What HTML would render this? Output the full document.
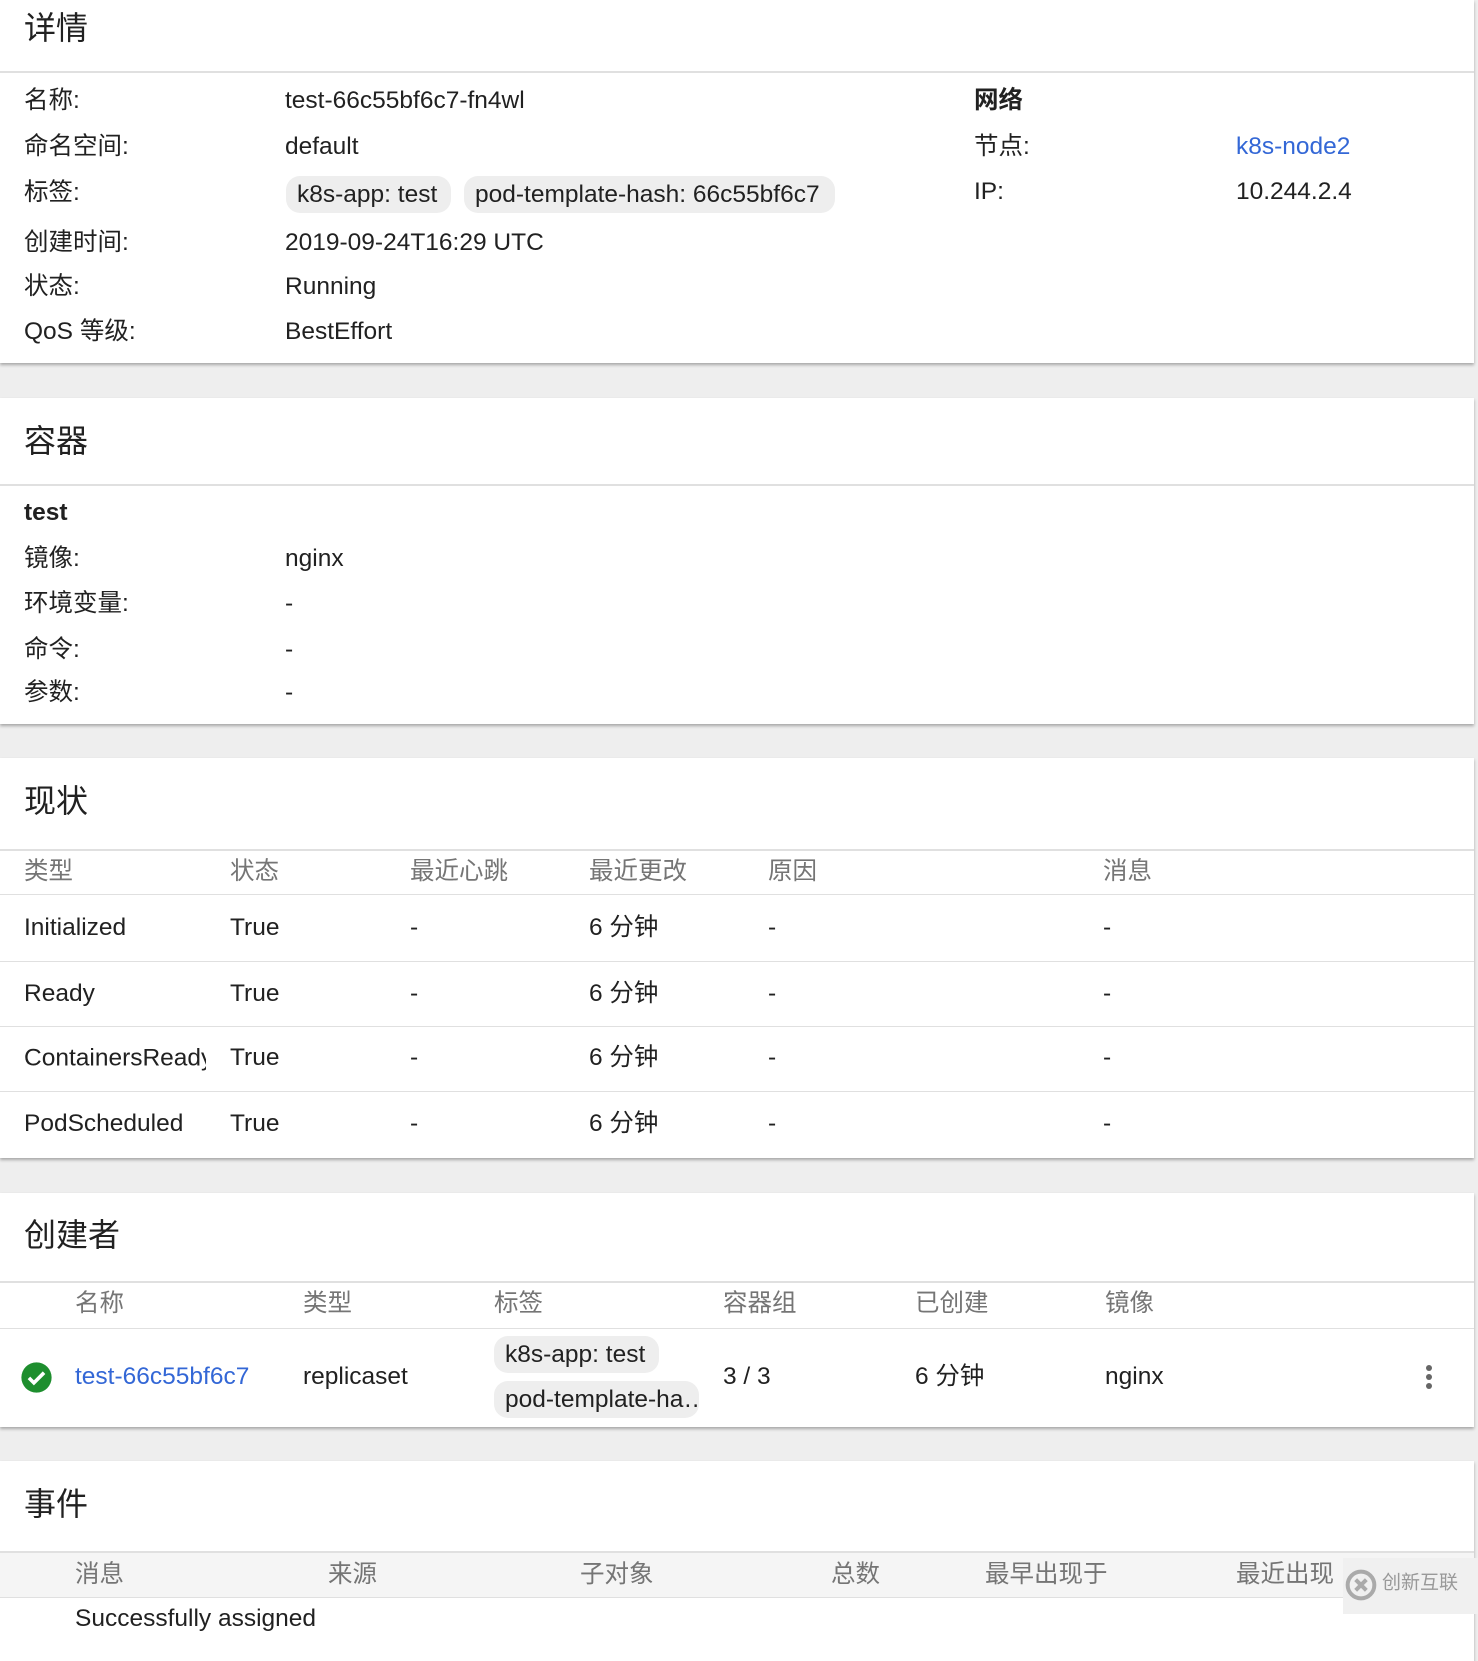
<!DOCTYPE html>
<html><head><meta charset="utf-8"><style>
*{margin:0;padding:0;box-sizing:border-box}
body{width:1478px;height:1614px;background:#eeeeee;font-family:"Liberation Sans","Noto Sans CJK SC",sans-serif;color:#212121;position:relative;overflow:hidden;font-size:24.5px}
.card{position:absolute;left:0;width:1474px;background:#fff;box-shadow:0 2px 3px rgba(0,0,0,.3)}
.t{position:absolute;white-space:nowrap;line-height:1;transform:translateY(-50%)}
.h{font-size:32px;color:#212121}
.hr{position:absolute;left:0;right:0;height:2px;background:#e0e0e0}
.g{color:#757575}
.b{font-weight:bold}
.chip{position:absolute;background:#eeeeee;border-radius:14px;height:37px;line-height:37px;padding:0 11px;white-space:nowrap}
a{color:#3367d6;text-decoration:none}
</style></head><body>

<div class="card" style="top:0;height:363px">
<div class="t h" style="left:24px;top:28px">详情</div>
<div class="hr" style="top:71px"></div>
<div class="t" style="left:24px;top:101px">名称:</div><div class="t" style="left:285px;top:101px">test-66c55bf6c7-fn4wl</div>
<div class="t" style="left:24px;top:147px">命名空间:</div><div class="t" style="left:285px;top:147px">default</div>
<div class="t" style="left:24px;top:193px">标签:</div>
<div class="chip" style="left:286px;top:176px;width:165px">k8s-app: test</div>
<div class="chip" style="left:464px;top:176px;width:371px">pod-template-hash: 66c55bf6c7</div>
<div class="t" style="left:24px;top:243px">创建时间:</div><div class="t" style="left:285px;top:243px">2019-09-24T16:29 UTC</div>
<div class="t" style="left:24px;top:287px">状态:</div><div class="t" style="left:285px;top:287px">Running</div>
<div class="t" style="left:24px;top:332px">QoS 等级:</div><div class="t" style="left:285px;top:332px">BestEffort</div>
<div class="t b" style="left:974px;top:101px">网络</div>
<div class="t" style="left:974px;top:147px">节点:</div><div class="t" style="left:1236px;top:147px"><a>k8s-node2</a></div>
<div class="t" style="left:974px;top:192px">IP:</div><div class="t" style="left:1236px;top:192px">10.244.2.4</div>
</div>

<div class="card" style="top:398px;height:326px">
<div class="t h" style="left:24px;top:43px">容器</div>
<div class="hr" style="top:86px"></div>
<div class="t b" style="left:24px;top:115px">test</div>
<div class="t" style="left:24px;top:161px">镜像:</div><div class="t" style="left:285px;top:161px">nginx</div>
<div class="t" style="left:24px;top:206px">环境变量:</div><div class="t" style="left:285px;top:206px">-</div>
<div class="t" style="left:24px;top:252px">命令:</div><div class="t" style="left:285px;top:252px">-</div>
<div class="t" style="left:24px;top:295px">参数:</div><div class="t" style="left:285px;top:295px">-</div>
</div>

<div class="card" style="top:758px;height:400px">
<div class="t h" style="left:24px;top:43px">现状</div>
<div class="hr" style="top:91px"></div>
<div class="t g" style="left:24px;top:114px">类型</div><div class="t g" style="left:230px;top:114px">状态</div><div class="t g" style="left:410px;top:114px">最近心跳</div><div class="t g" style="left:589px;top:114px">最近更改</div><div class="t g" style="left:768px;top:114px">原因</div><div class="t g" style="left:1103px;top:114px">消息</div>
<div class="hr" style="top:136px;height:1px"></div>
<div class="t" style="left:24px;top:170px">Initialized</div><div class="t" style="left:230px;top:170px">True</div><div class="t" style="left:410px;top:170px">-</div><div class="t" style="left:589px;top:170px">6 分钟</div><div class="t" style="left:768px;top:170px">-</div><div class="t" style="left:1103px;top:170px">-</div>
<div class="hr" style="top:203px;height:1px"></div>
<div class="t" style="left:24px;top:236px">Ready</div><div class="t" style="left:230px;top:236px">True</div><div class="t" style="left:410px;top:236px">-</div><div class="t" style="left:589px;top:236px">6 分钟</div><div class="t" style="left:768px;top:236px">-</div><div class="t" style="left:1103px;top:236px">-</div>
<div class="hr" style="top:268px;height:1px"></div>
<div class="t" style="left:24px;top:300px;width:182px;overflow:hidden;line-height:1.2">ContainersReady</div><div class="t" style="left:230px;top:300px">True</div><div class="t" style="left:410px;top:300px">-</div><div class="t" style="left:589px;top:300px">6 分钟</div><div class="t" style="left:768px;top:300px">-</div><div class="t" style="left:1103px;top:300px">-</div>
<div class="hr" style="top:333px;height:1px"></div>
<div class="t" style="left:24px;top:366px">PodScheduled</div><div class="t" style="left:230px;top:366px">True</div><div class="t" style="left:410px;top:366px">-</div><div class="t" style="left:589px;top:366px">6 分钟</div><div class="t" style="left:768px;top:366px">-</div><div class="t" style="left:1103px;top:366px">-</div>
</div>

<div class="card" style="top:1193px;height:234px">
<div class="t h" style="left:24px;top:42px">创建者</div>
<div class="hr" style="top:88px"></div>
<div class="t g" style="left:75px;top:111px">名称</div><div class="t g" style="left:303px;top:111px">类型</div><div class="t g" style="left:494px;top:111px">标签</div><div class="t g" style="left:723px;top:111px">容器组</div><div class="t g" style="left:915px;top:111px">已创建</div><div class="t g" style="left:1105px;top:111px">镜像</div>
<div class="hr" style="top:135px;height:1px"></div>
<svg style="position:absolute;left:20px;top:168px" width="33" height="33" viewBox="0 0 24 24"><circle cx="12" cy="12" r="11" fill="#1e8e2e"/><path d="M6.5 12.3l3.6 3.6 7.4-7.4" stroke="#fff" stroke-width="2.6" fill="none"/></svg>
<div class="t" style="left:75px;top:184px"><a>test-66c55bf6c7</a></div>
<div class="t" style="left:303px;top:184px">replicaset</div>
<div class="chip" style="left:494px;top:143px;width:165px">k8s-app: test</div>
<div class="chip" style="left:494px;top:188px;width:205px;overflow:hidden">pod-template-ha…</div>
<div class="t" style="left:723px;top:184px">3 / 3</div>
<div class="t" style="left:915px;top:184px">6 分钟</div>
<div class="t" style="left:1105px;top:184px">nginx</div>
<div style="position:absolute;left:1426px;top:172px;width:6px">
<div style="width:6px;height:6px;border-radius:3px;background:#666;margin-bottom:3px"></div>
<div style="width:6px;height:6px;border-radius:3px;background:#666;margin-bottom:3px"></div>
<div style="width:6px;height:6px;border-radius:3px;background:#666"></div></div>
</div>

<div class="card" style="top:1461px;height:200px">
<div class="t h" style="left:24px;top:43px">事件</div>
<div class="hr" style="top:90px"></div>
<div style="position:absolute;left:0;right:0;top:92px;height:45px;background:#f5f5f5;border-bottom:1px solid #e0e0e0"></div>
<div class="t g" style="left:75px;top:114px">消息</div><div class="t g" style="left:328px;top:114px">来源</div><div class="t g" style="left:580px;top:114px">子对象</div><div class="t g" style="left:831px;top:114px">总数</div><div class="t g" style="left:985px;top:114px">最早出现于</div><div class="t g" style="left:1236px;top:114px">最近出现</div>
<div class="t" style="left:75px;top:158px">Successfully assigned</div>
</div>
<div style="position:absolute;left:1343px;top:1558px;width:135px;height:56px;background:#f0f0f0"></div>
<svg style="position:absolute;left:1345px;top:1569px" width="32" height="32" viewBox="0 0 24 24"><circle cx="12" cy="12" r="10" fill="none" stroke="#aaa" stroke-width="3"/><path d="M8 8l8 8M16 8l-8 8" stroke="#aaa" stroke-width="3"/></svg>
<div class="t" style="left:1382px;top:1583px;color:#999;font-size:19px">创新互联</div>
</body></html>
